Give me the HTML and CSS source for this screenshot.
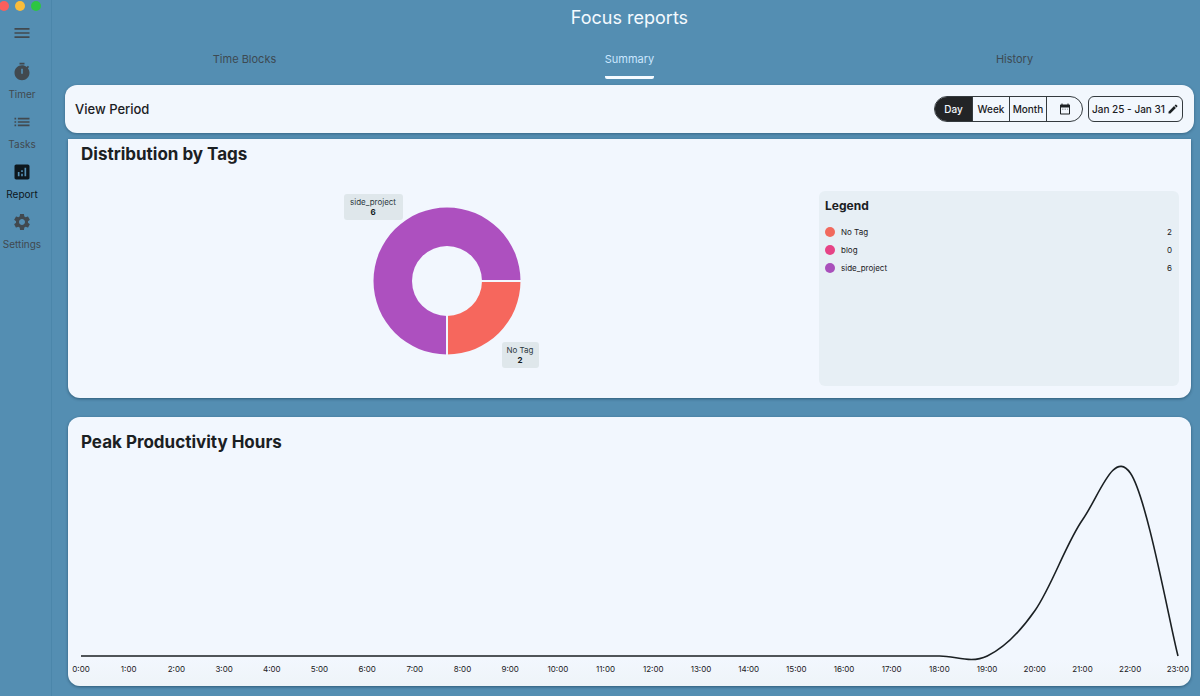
FILE: index.html
```html
<!DOCTYPE html>
<html lang="en">
<head>
<meta charset="utf-8">
<meta name="viewport" content="width=device-width, initial-scale=1">
<title>Focus reports</title>
<link rel="stylesheet" href="styles.css">
</head>
<body>
<div class="app">
  <aside class="sidebar">
    <div class="lights"><span class="light red"></span><span class="light yellow"></span><span class="light green"></span></div>
    <button class="menu" type="button" aria-label="Menu"><svg class="icon" viewBox="0 0 24 24"><path d="M3 18h18v-2H3v2zm0-5h18v-2H3v2zm0-7v2h18V6H3z"/></svg></button>
    <nav class="nav">
      <a class="nav-item" href="#timer"><svg class="icon" viewBox="0 0 24 24"><path d="M9 1h6v2H9zM19.03 7.39l1.42-1.42c-.43-.51-.9-.99-1.41-1.41l-1.42 1.42C16.07 4.74 14.12 4 12 4c-4.97 0-9 4.03-9 9s4.02 9 9 9 9-4.03 9-9c0-2.12-.74-4.07-1.97-5.61zM13 14h-2V8h2v6z"/></svg><span>Timer</span></a>
      <a class="nav-item" href="#tasks"><svg class="icon" viewBox="0 0 24 24"><path d="M3 13h2v-2H3v2zm0 4h2v-2H3v2zm0-8h2V7H3v2zm4 4h14v-2H7v2zm0 4h14v-2H7v2zM7 7v2h14V7H7z"/></svg><span>Tasks</span></a>
      <a class="nav-item active" href="#report" aria-current="page"><svg class="icon" viewBox="0 0 24 24"><path d="M19 3H5c-1.100 0-2 .9-2 2v14c0 1.100.9 2 2 2h14c1.100 0 2-.9 2-2V5c0-1.100-.9-2-2-2zM9 17H7v-5h2v5zm4 0h-2v-3h2v3zm0-5h-2v-2h2v2zm4 5h-2V7h2v10z"/></svg><span>Report</span></a>
      <a class="nav-item" href="#settings"><svg class="icon" viewBox="0 0 24 24"><path d="M19.14 12.94c.04-.3.06-.61.06-.94 0-.32-.02-.64-.07-.94l2.03-1.58c.18-.14.23-.41.12-.61l-1.920-3.320c-.12-.22-.37-.29-.59-.22l-2.390.96c-.5-.38-1.030-.7-1.620-.94l-.36-2.540c-.04-.24-.24-.41-.48-.41h-3.840c-.24 0-.43.17-.47.41l-.36 2.540c-.59.24-1.130.57-1.620.94l-2.390-.96c-.22-.08-.47 0-.59.22L2.740 8.870c-.12.21-.08.47.12.61l2.030 1.580c-.05.3-.09.63-.09.94s.02.64.07.94l-2.030 1.580c-.18.14-.23.41-.12.61l1.920 3.320c.12.22.37.29.59.22l2.390-.96c.5.38 1.030.7 1.620.94l.36 2.540c.05.24.24.41.48.41h3.840c.24 0 .44-.17.47-.41l.36-2.540c.59-.24 1.130-.56 1.620-.94l2.390.96c.22.08.47 0 .59-.22l1.920-3.320c.12-.22.07-.47-.12-.61l-2.010-1.580zM12 15.600c-1.980 0-3.600-1.620-3.600-3.600s1.620-3.600 3.600-3.600 3.600 1.620 3.600 3.600-1.620 3.600-3.600 3.600z"/></svg><span>Settings</span></a>
    </nav>
  </aside>

  <main class="main">
    <h1 class="title">Focus reports</h1>
    <nav class="tabs" aria-label="Report views">
      <a class="tab" href="#blocks">Time Blocks</a>
      <a class="tab selected" href="#summary" aria-current="page">Summary</a>
      <a class="tab" href="#history">History</a>
    </nav>

    <section class="period">
      <h2 class="period-title">View Period</h2>
      <div class="segments" role="group" aria-label="View period">
        <button class="segment on" type="button" aria-pressed="true">Day</button>
        <button class="segment" type="button">Week</button>
        <button class="segment" type="button">Month</button>
        <button class="segment" type="button" aria-label="Custom dates"><svg class="small-icon" viewBox="0 0 24 24"><path d="M20 3h-1V1h-2v2H7V1H5v2H4c-1.100 0-2 .9-2 2v16c0 1.100.9 2 2 2h16c1.100 0 2-.9 2-2V5c0-1.100-.9-2-2-2zm0 18H4V9h16v12z"/><path d="M6 11h3v3H6zm5 0h3v3h-3zm5 0h2v3h-2z" opacity=".3"/></svg></button>
      </div>
      <button class="range" type="button">Jan 25 - Jan 31<svg class="pencil" viewBox="0 0 24 24"><path d="M3 17.250V21h3.750L17.810 9.940l-3.750-3.750L3 17.250zM20.710 7.040c.39-.39.39-1.020 0-1.410l-2.340-2.340c-.39-.39-1.020-.39-1.410 0l-1.830 1.830 3.750 3.750 1.830-1.830z"/></svg></button>
    </section>

    <section class="card tags">
      <h2 class="heading">Distribution by Tags</h2>
      <div class="tags-body">
        <div class="donut-area">
          <div class="donut-wrap">
            <svg class="donut" viewBox="0 0 148 148" role="img" aria-label="Tag distribution">
              <path fill="#ad50bf" d="M147.500 74A73.500 73.500 0 1 0 74 147.500V109A35 35 0 1 1 109 74Z"/>
              <path fill="#f6675d" d="M147.500 74A73.500 73.500 0 0 1 74 147.500V109A35 35 0 0 0 109 74Z"/>
              <path stroke="#f2f7fe" stroke-width="2" d="M108 74H148M74 108V148"/>
            </svg>
            <div class="tip tip-project">side_project<b>6</b></div>
            <div class="tip tip-none">No Tag<b>2</b></div>
          </div>
        </div>
        <div class="legend">
          <h3 class="legend-title">Legend</h3>
          <ul class="legend-list">
            <li><span class="dot coral"></span><span class="name">No Tag</span><span>2</span></li>
            <li><span class="dot pink"></span><span class="name">blog</span><span>0</span></li>
            <li><span class="dot purple"></span><span class="name">side_project</span><span>6</span></li>
          </ul>
        </div>
      </div>
    </section>

    <section class="card peak">
      <h2 class="heading">Peak Productivity Hours</h2>
      <svg class="line" viewBox="0 0 1097 204" preserveAspectRatio="none" role="img" aria-label="Productivity by hour">
        <path d="M0 196H858.600C875.300 196 889.600 204 906.300 196C923 188 937.300 174.400 954 150.500C970.700 126.600 985 83.400 1001.700 59.500C1018.400 35.600 1032.700 -10.900 1049.300 13C1066 36.900 1088.700 164.100 1097 196"/>
      </svg>
      <div class="hours">
        <span>0:00</span><span>1:00</span><span>2:00</span><span>3:00</span><span>4:00</span><span>5:00</span><span>6:00</span><span>7:00</span><span>8:00</span><span>9:00</span><span>10:00</span><span>11:00</span><span>12:00</span><span>13:00</span><span>14:00</span><span>15:00</span><span>16:00</span><span>17:00</span><span>18:00</span><span>19:00</span><span>20:00</span><span>21:00</span><span>22:00</span><span>23:00</span>
      </div>
    </section>
  </main>
</div>
</body>
</html>
```
FILE: styles.css
```css
* { box-sizing: border-box; }

body {
  margin: 0;
  background: #548eb2;
  color: #1b2023;
  font-family: Inter, "Liberation Sans", sans-serif;
  font-size: 10px;
}

h1, h2, h3, ul { margin: 0; padding: 0; }
button { font: inherit; color: inherit; background: none; border: 0; padding: 0; cursor: pointer; }
a { color: inherit; text-decoration: none; }
svg { display: block; fill: currentColor; }

.app { display: flex; min-height: 100vh; }

.sidebar {
  flex: none;
  width: 52px;
  border-right: 1px solid #4b86aa;
  padding-right: 7px;
  color: #41494f;
}
.lights { display: flex; gap: 6px; padding-top: 1px; margin-left: -1px; }
.light { width: 10px; height: 10px; border-radius: 50%; }
.red { background: #fc5f5c; }
.yellow { background: #fabd3b; }
.green { background: #2dc641; }

.menu { display: flex; justify-content: center; width: 100%; margin-top: 12px; }
.icon { width: 20px; height: 20px; }
.nav { margin-top: 19px; }
.nav-item {
  display: flex;
  flex-direction: column;
  align-items: center;
  gap: 5px;
  height: 50px;
  line-height: 14px;
}
.nav-item.active { color: #0d171d; }

.main { flex: 1; min-width: 0; padding: 0 6px 9px 13px; }
.title {
  color: #f4faff;
  font-size: 18px;
  font-weight: 400;
  line-height: 36px;
  text-align: center;
}
.tabs {
  display: grid;
  grid-template-columns: repeat(3, 1fr);
  gap: 26px;
  justify-items: center;
  height: 43px;
  font-size: 11px;
  color: #3d4a52;
}
.tab { height: 43px; line-height: 46px; }
.tab.selected { color: #cbe7ff; border-bottom: 3px solid #f4faff; border-radius: 2px; }

.period {
  display: flex;
  align-items: center;
  height: 48px;
  margin-top: 6px;
  padding: 0 11px 0 10px;
  border-radius: 12px;
  background: #f2f7fd;
  box-shadow: 0 1px 3px rgba(0, 30, 50, .35);
}
.period-title { flex: 1; font-size: 13px; font-weight: 500; }
.segments {
  display: flex;
  height: 26px;
  border: 1px solid #343a3e;
  border-radius: 13px;
  overflow: hidden;
}
.segment {
  display: flex;
  align-items: center;
  justify-content: center;
  width: 37px;
  border-left: 1px solid #343a3e;
  font-weight: 500;
}
.segment:first-child { border-left: 0; }
.segment:last-child { width: 36px; }
.segment.on { background: #222426; color: #f2f7fd; }
.small-icon { width: 12px; height: 12px; }
.range {
  display: flex;
  align-items: center;
  justify-content: space-between;
  width: 95px;
  height: 26px;
  margin-left: 5px;
  padding: 0 3px;
  border: 1px solid #343a3e;
  border-radius: 6px;
  font-weight: 500;
  white-space: nowrap;
}
.pencil { width: 12px; height: 12px; }

.card {
  margin: 0 3px;
  padding: 0 13px;
  border-radius: 12px;
  background: #f2f7fe;
  box-shadow: 0 1px 3px rgba(0, 30, 50, .45);
}
.heading { font-size: 17px; font-weight: 700; line-height: 30px; }

.tags { margin-top: 6px; padding-bottom: 12px; border-radius: 0 0 12px 12px; }
.tags-body { display: flex; padding-top: 22px; }
.donut-area { flex: 1; display: flex; justify-content: center; padding-top: 16px; }
.donut-wrap { position: relative; width: 148px; height: 148px; margin-right: 7px; }
.donut { width: 148px; height: 148px; fill: none; }
.tip {
  position: absolute;
  padding: 3px 4px;
  border-radius: 3px;
  background: #dfe7eb;
  color: #2c3940;
  font-size: 8px;
  line-height: 10px;
  text-align: center;
  white-space: nowrap;
}
.tip b { display: block; color: #11191d; }
.tip-project { right: 118px; top: -13px; width: 59px; }
.tip-none { left: 129px; top: 135px; width: 37px; }

.legend {
  width: 360px;
  min-height: 195px;
  margin-right: -1px;
  padding: 7px 7px 7px 6px;
  border-radius: 6px;
  background: #e7eff5;
}
.legend-title { font-size: 12px; line-height: 16px; }
.legend-list { margin-top: 9px; list-style: none; font-size: 8px; }
.legend-list li { display: flex; align-items: center; height: 18px; }
.dot { width: 10px; height: 10px; margin-right: 6px; border-radius: 50%; }
.name { flex: 1; }
.coral { background: #f1695d; }
.pink { background: #e64386; }
.purple { background: #a950bb; }

.peak { margin-top: 19px; padding-top: 10px; padding-bottom: 12px; background: linear-gradient(#f2f7fe 90%, #eef4f8); }
.line {
  width: 100%;
  height: 204px;
  margin-top: 3px;
  fill: none;
  stroke: #1b2023;
  stroke-width: 1.600;
  overflow: visible;
}
.hours { display: flex; justify-content: space-between; font-size: 8px; line-height: 10px; }
.hours span { display: flex; justify-content: center; width: 0; }
```
